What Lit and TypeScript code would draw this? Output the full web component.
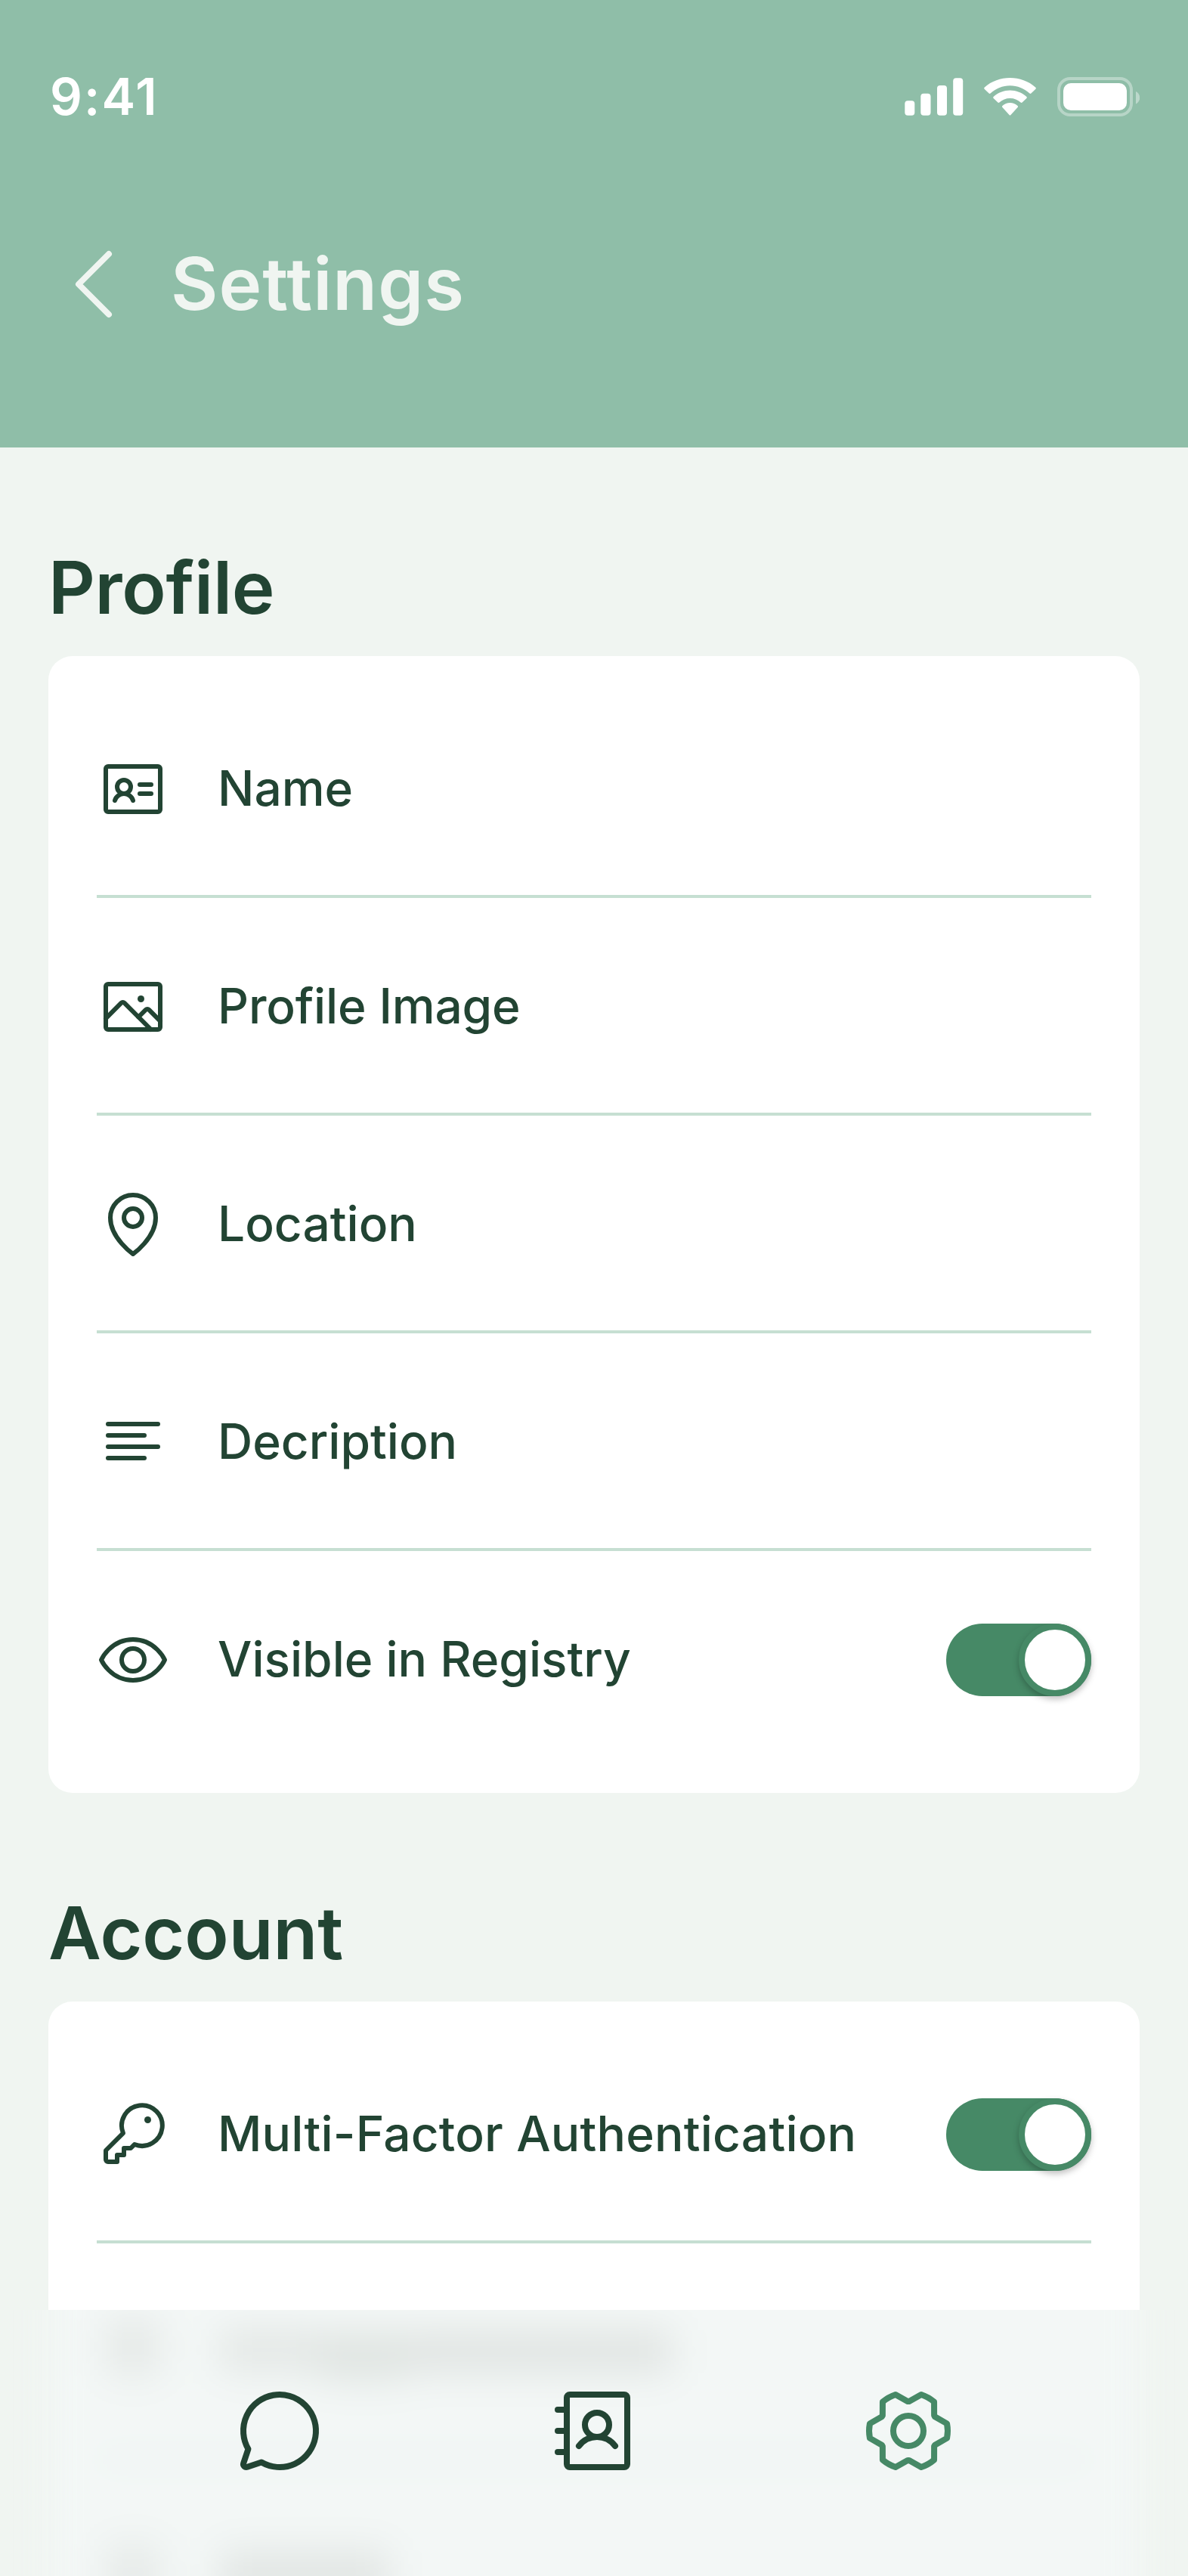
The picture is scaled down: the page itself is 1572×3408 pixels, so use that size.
import { LitElement, html, css, svg, nothing } from "lit";
import type { SVGTemplateResult } from "lit";
import { customElement, property } from "lit/decorators.js";
import { styleMap } from "lit/directives/style-map.js";

const icons: Record<string, SVGTemplateResult> = {
  back: svg`<polyline points="160 208 80 128 160 48"/>`,
  idCard: svg`
    <rect x="32" y="48" width="192" height="160" rx="8"/>
    <line x1="152" y1="112" x2="192" y2="112"/>
    <line x1="152" y1="144" x2="192" y2="144"/>
    <circle cx="96" cy="120" r="24"/>
    <path d="M64,168c3.55-13.8,17.09-24,32-24s28.46,10.19,32,24"/>`,
  image: svg`
    <rect x="32" y="48" width="192" height="160" rx="8"/>
    <circle class="dot" cx="156" cy="100" r="12"/>
    <path d="M147.31,164,173,138.34a8,8,0,0,1,11.31,0L224,178.06"/>
    <path d="M32,168.69l54.34-54.35a8,8,0,0,1,11.32,0L191.31,208"/>`,
  pin: svg`
    <circle cx="128" cy="104" r="32"/>
    <path d="M208,104c0,72-80,128-80,128S48,176,48,104a80,80,0,0,1,160,0Z"/>`,
  lines: svg`
    <line x1="40" y1="64" x2="216" y2="64"/>
    <line x1="40" y1="104" x2="168" y2="104"/>
    <line x1="40" y1="144" x2="216" y2="144"/>
    <line x1="40" y1="184" x2="168" y2="184"/>`,
  eye: svg`
    <path d="M128,56C48,56,16,128,16,128s32,72,112,72,112-72,112-72S208,56,128,56Z"/>
    <circle cx="128" cy="128" r="40"/>`,
  key: svg`
    <path d="M93.17,122.83a71.68,71.68,0,1,1,40,40h0L120,176H96v24H72v24H40a8,8,0,0,1-8-8V184l61.17-61.17Z"/>
    <circle class="dot" cx="180" cy="76" r="12"/>`,
  chat: svg`<path d="M79.93,211.11a96,96,0,1,0-35-35h0L32.42,213.46a8,8,0,0,0,10.12,10.12l37.39-12.47Z"/>`,
  contacts: svg`
    <circle cx="136" cy="112" r="32"/>
    <rect x="56" y="32" width="160" height="192" rx="8"/>
    <path d="M88,168a60,60,0,0,1,96,0"/>
    <line x1="32" y1="72" x2="56" y2="72"/>
    <line x1="32" y1="128" x2="56" y2="128"/>
    <line x1="32" y1="184" x2="56" y2="184"/>`,
  gear: svg`
    <circle cx="128" cy="128" r="40"/>
    <path d="M130.05,206.11c-1.34,0-2.69,0-4,0L94,224a104.61,104.61,0,0,1-34.11-19.2l-.12-36c-.71-1.12-1.38-2.25-2-3.41L25.9,147.24a99.15,99.15,0,0,1,0-38.46l31.84-18.1c.65-1.15,1.32-2.29,2-3.41l.16-36A104.58,104.58,0,0,1,94,32l32,17.89c1.34,0,2.69,0,4,0L162,32a104.61,104.61,0,0,1,34.11,19.2l.12,36c.71,1.12,1.38,2.25,2,3.41l31.85,18.14a99.15,99.15,0,0,1,0,38.46l-31.84,18.1c-.65,1.15-1.32,2.29-2,3.41l-.16,36A104.58,104.58,0,0,1,162,224Z"/>`,
};

@customElement("line-icon")
export class LineIcon extends LitElement {
  @property() name = "";

  static styles = css`
    :host {
      display: block;
      flex: none;
      width: 96px;
      height: 96px;
    }
    .glyph {
      display: block;
      width: 100%;
      height: 100%;
      fill: none;
      stroke: currentColor;
      stroke-width: 16;
      stroke-linecap: round;
      stroke-linejoin: round;
    }
    .dot {
      fill: currentColor;
      stroke: none;
    }
  `;

  render() {
    return html`<svg class="glyph" viewBox="0 0 256 256" aria-hidden="true">${icons[this.name]}</svg>`;
  }
}

@customElement("toggle-switch")
export class ToggleSwitch extends LitElement {
  static styles = css`
    :host {
      display: flex;
      justify-content: flex-end;
      flex: none;
      width: 192px;
      height: 96px;
      border-radius: 48px;
      background: #468966;
    }
    .knob {
      box-sizing: border-box;
      width: 96px;
      height: 96px;
      border: 8px solid #468966;
      border-radius: 50%;
      background: #fff;
      box-shadow: 0 4px 8px rgba(0, 0, 0, 0.25);
    }
  `;

  render() {
    return html`<div class="knob"></div>`;
  }
}

interface Item {
  icon: string;
  label: string;
  toggle?: boolean;
  divider?: boolean;
  tracking?: number;
}

@customElement("settings-section")
export class SettingsSection extends LitElement {
  @property() heading = "";
  @property({ type: Number }) tracking = 0;
  @property({ attribute: false }) items: Item[] = [];

  static styles = css`
    :host {
      display: flex;
      flex-direction: column;
      gap: 34px;
    }
    .heading {
      margin: 0;
      font-size: 96px;
      line-height: 114px;
      font-weight: 600;
    }
    .card {
      flex: 1;
      padding: 32px 64px;
      border-radius: 32px;
      background: #fff;
    }
    .row {
      display: flex;
      align-items: center;
      gap: 64px;
      height: 288px;
    }
    .divided {
      box-shadow: inset 0 -4px 0 #c6dfd2;
    }
    .label {
      flex: 1;
      padding-bottom: 4px;
      font-size: 64px;
      line-height: 77px;
      font-weight: 500;
      white-space: nowrap;
    }
  `;

  render() {
    return html`
      <h2 class="heading" style=${styleMap({ letterSpacing: `${this.tracking}px` })}>${this.heading}</h2>
      <div class="card">
        ${this.items.map(
          (item) => html`
            <div class="row ${item.divider ? "divided" : ""}">
              <line-icon name=${item.icon}></line-icon>
              <span class="label" style=${styleMap({ letterSpacing: `${item.tracking ?? 0}px` })}>${item.label}</span>
              ${item.toggle ? html`<toggle-switch></toggle-switch>` : nothing}
            </div>
          `,
        )}
      </div>
    `;
  }
}

const profileItems: Item[] = [
  { icon: "idCard", label: "Name", divider: true },
  { icon: "image", label: "Profile Image", divider: true, tracking: -0.15 },
  { icon: "pin", label: "Location", divider: true },
  { icon: "lines", label: "Decription", divider: true },
  { icon: "eye", label: "Visible in Registry", toggle: true },
];

const accountItems: Item[] = [
  { icon: "key", label: "Multi-Factor Authentication", toggle: true, divider: true, tracking: 0.2 },
];

@customElement("app-root")
export class AppRoot extends LitElement {
  static styles = css`
    :host {
      display: flex;
      flex-direction: column;
      position: relative;
      width: 1572px;
      height: 3408px;
      overflow: hidden;
      background: #f0f5f1;
      color: #224433;
      font-family: Inter, "Liberation Sans", sans-serif;
    }
    .header {
      flex: none;
      box-sizing: border-box;
      height: 592px;
      padding: 88px 64px 0;
      background: #8fbea8;
      color: #f0f5f1;
    }
    .status {
      display: flex;
      align-items: center;
      justify-content: space-between;
      height: 80px;
      color: #fff;
    }
    .time {
      padding-left: 2px;
      font-size: 67px;
      line-height: 80px;
      font-weight: 600;
      letter-spacing: 2.2px;
    }
    .indicators {
      display: block;
      width: 312px;
      height: 80px;
    }
    .title-row {
      display: flex;
      align-items: center;
      gap: 34px;
      margin-top: 144px;
    }
    .back {
      width: 128px;
      height: 128px;
    }
    .title {
      margin: 0;
      padding-bottom: 2px;
      font-size: 96px;
      line-height: 116px;
      font-weight: 600;
      letter-spacing: 1.05px;
    }
    .content {
      flex: 1;
      display: flex;
      flex-direction: column;
      gap: 128px;
      min-height: 0;
      padding: 128px 64px 0;
    }
    .rest {
      flex: 1;
    }
    .tabs {
      position: absolute;
      left: 0;
      right: 0;
      bottom: 0;
      height: 352px;
      background: #f0f5f1;
    }
    .frost {
      position: absolute;
      inset: 0;
      width: 100%;
      height: 100%;
    }
    .tab-row {
      position: relative;
      display: flex;
      justify-content: center;
      gap: 288px;
      padding-top: 96px;
    }
    .tab {
      width: 128px;
      height: 128px;
    }
    .active {
      color: #468966;
    }
  `;

  render() {
    return html`
      <header class="header">
        <div class="status">
          <span class="time">9:41</span>
          <svg class="indicators" viewBox="1196 88 312 80" fill="#fff" aria-hidden="true">
            <rect x="1197.3" y="133.3" width="13" height="19.4" rx="4"/>
            <rect x="1218.3" y="123.8" width="13.2" height="28.9" rx="4"/>
            <rect x="1240" y="113" width="13" height="39.7" rx="4"/>
            <rect x="1261.2" y="103.2" width="13" height="49.5" rx="4"/>
            <path d="M1336.5 113.2C1346.2 113.2 1355.4 116.9 1362.4 123.5Q1363.4 124.3 1364.4 123.5L1370.4 117.7Q1371.4 116.7 1370.4 115.7C1351.4 98.9 1321.6 98.9 1302.6 115.7Q1301.6 116.7 1302.6 117.7L1308.6 123.5Q1309.6 124.3 1310.6 123.5C1317.6 116.9 1326.8 113.2 1336.5 113.2Z"/>
            <path d="M1336.5 130C1341.8 130 1346.8 132 1350.6 135.6Q1351.7 136.5 1352.6 135.6L1358.4 130.1Q1359.4 129.1 1358.4 128.1C1346.1 116.7 1326.9 116.7 1314.6 128.1Q1313.6 129.1 1314.6 130.1L1320.4 135.6Q1321.3 136.5 1322.4 135.6C1326.2 132 1331.2 130 1336.5 130Z"/>
            <path d="M1346.6 142Q1347.6 141 1346.6 140C1340.8 134.8 1332.2 134.8 1326.4 140Q1325.4 141 1326.4 142L1335.5 152Q1336.5 153 1337.5 152Z"/>
            <rect x="1401" y="104" width="96" height="48" rx="15" fill="none" stroke="#fff" stroke-width="4" opacity="0.36"/>
            <path d="M1503 121V137.4C1506 136 1508.2 133 1508.2 129.2C1508.2 125.4 1506 122.4 1503 121Z" opacity="0.4"/>
            <rect x="1407" y="110" width="84" height="36" rx="10"/>
          </svg>
        </div>
        <div class="title-row">
          <line-icon class="back" name="back"></line-icon>
          <h1 class="title">Settings</h1>
        </div>
      </header>
      <main class="content">
        <settings-section heading="Profile" tracking="-0.3" .items=${profileItems}></settings-section>
        <settings-section class="rest" heading="Account" .items=${accountItems}></settings-section>
      </main>
      <nav class="tabs">
        <svg class="frost" viewBox="0 0 1572 352" aria-hidden="true">
          <defs>
            <filter id="soft" filterUnits="userSpaceOnUse" x="-100" y="-200" width="1772" height="760" color-interpolation-filters="sRGB">
              <feGaussianBlur stdDeviation="25"/>
            </filter>
          </defs>
          <g filter="url(#soft)">
            <rect x="64" y="-200" width="1444" height="760" fill="#f3f7f6"/>
            <rect x="128" y="196" width="1316" height="4" fill="#e0ebe5"/>
            <rect x="140" y="10" width="72" height="78" rx="10" fill="#e6eae8"/>
            <rect x="290" y="24" width="130" height="58" rx="8" fill="#e4e8e6"/>
            <rect x="420" y="28" width="120" height="66" rx="8" fill="#e0e5e2"/>
            <rect x="540" y="26" width="350" height="58" rx="8" fill="#e1e5e3"/>
            <rect x="140" y="310" width="72" height="74" rx="10" fill="#e6eae8"/>
            <rect x="290" y="318" width="225" height="68" rx="8" fill="#e2e6e4"/>
          </g>
        </svg>
        <div class="tab-row">
          <line-icon class="tab" name="chat"></line-icon>
          <line-icon class="tab" name="contacts"></line-icon>
          <line-icon class="tab active" name="gear"></line-icon>
        </div>
      </nav>
    `;
  }
}
